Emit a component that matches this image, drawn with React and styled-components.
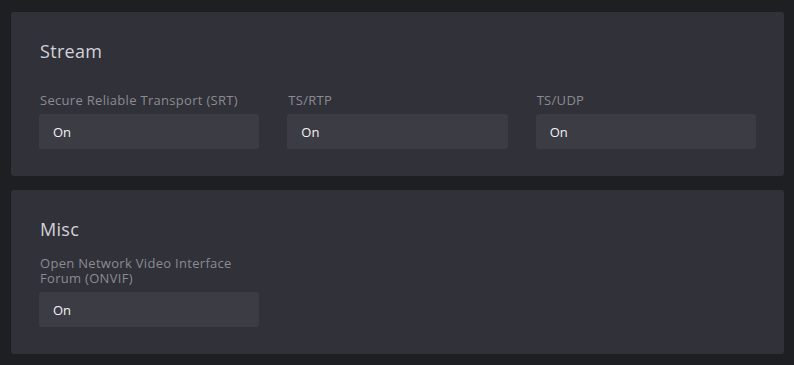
import React from "react";
import styled, { createGlobalStyle } from "styled-components";

const Global = createGlobalStyle`
  html, body { margin: 0; padding: 0; background: #1e1f22; }
  body { font-family: "Open Sans", "Liberation Sans", sans-serif; }
`;

const Page = styled.div`
  display: flex;
  flex-direction: column;
  gap: 14px;
  padding: 12px 10px 10px 11px;
  background: #1e1f22;
  min-height: 365px;
  box-sizing: border-box;
`;

const Card = styled.section`
  background: #313139;
  border-radius: 3px;
  padding: 28px 28px 27px 28px;
`;

const Title = styled.h2`
  margin: 0 0 16px 1px;
  font-size: 18px;
  line-height: 22px;
  font-weight: 400;
  letter-spacing: 0.3px;
  color: #d2d2d8;
`;

const Grid = styled.div`
  display: grid;
  grid-template-columns: repeat(3, 1fr);
  column-gap: 28px;
`;

const Field = styled.div`
  display: flex;
  flex-direction: column;
`;

const Label = styled.label`
  display: flex;
  align-items: flex-end;
  min-height: 30px;
  margin-bottom: 6px;
  padding-left: 1px;
  font-size: 13px;
  line-height: 15px;
  letter-spacing: 0.3px;
  color: #8b8b93;
`;

const Value = styled.div`
  height: 35px;
  display: flex;
  align-items: center;
  padding: 0 14px;
  background: #3c3c45;
  border-radius: 3px;
  font-size: 13px;
  font-weight: 500;
  color: #f2f2f4;
`;

const sections = [
  {
    title: "Stream",
    fields: ["Secure Reliable Transport (SRT)", "TS/RTP", "TS/UDP"],
  },
  {
    title: "Misc",
    fields: ["Open Network Video Interface Forum (ONVIF)"],
  },
];

export default function App() {
  return (
    <>
      <Global />
      <Page>
        {sections.map((s) => (
          <Card key={s.title}>
            <Title>{s.title}</Title>
            <Grid>
              {s.fields.map((f) => (
                <Field key={f}>
                  <Label>{f}</Label>
                  <Value>On</Value>
                </Field>
              ))}
            </Grid>
          </Card>
        ))}
      </Page>
    </>
  );
}
